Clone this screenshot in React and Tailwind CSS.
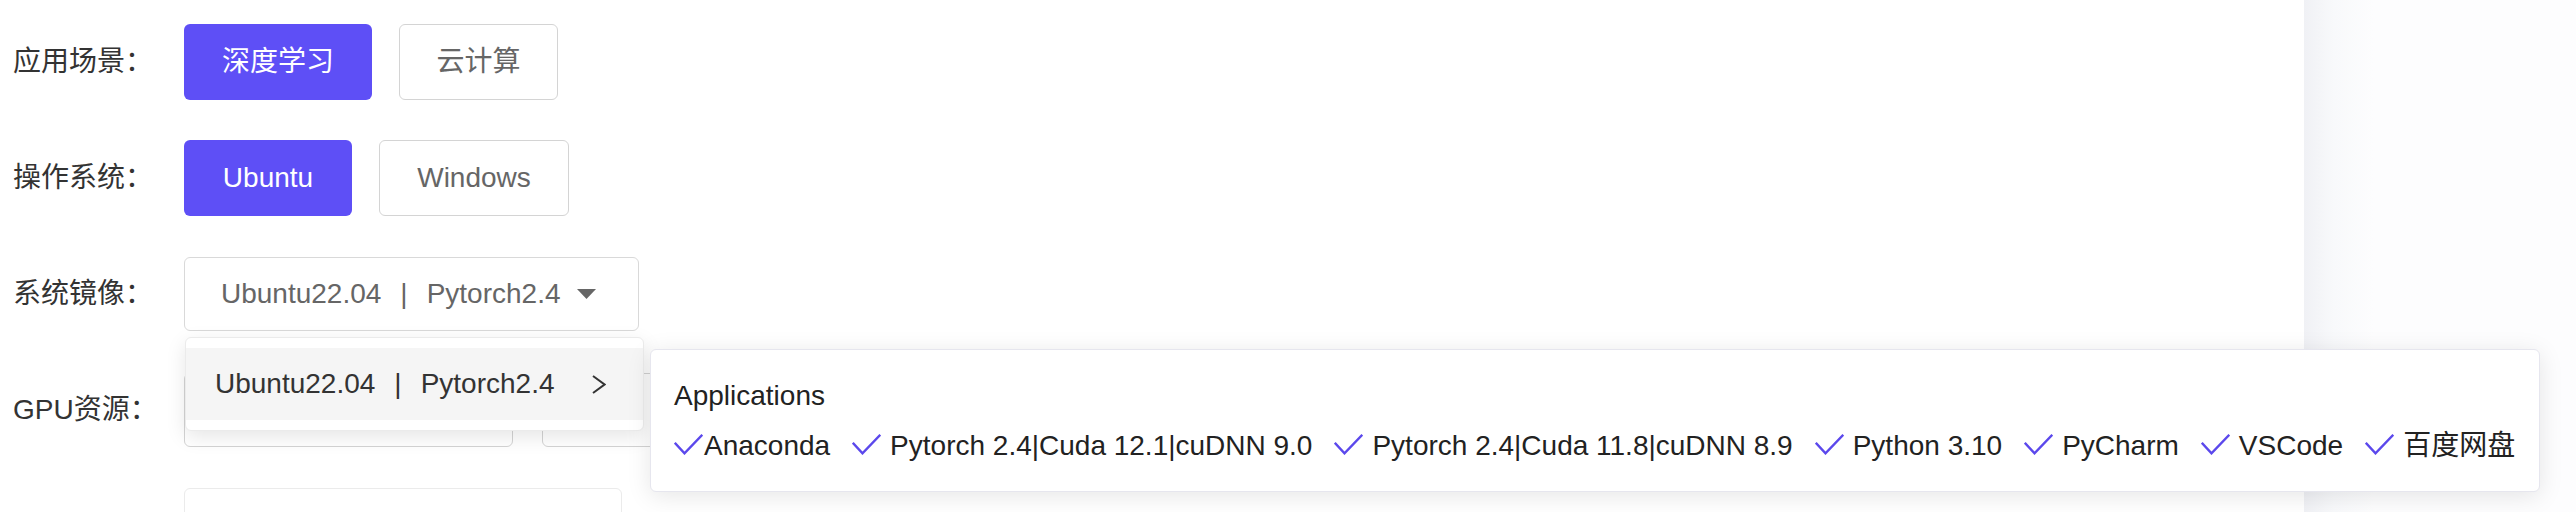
import React from "react";

function Check() {
  return (
    <svg width="29" height="21" viewBox="0 0 29 21" className="shrink-0 mb-[4px]">
      <polyline points="0.8,8.8 10.5,19.3 28.3,0.8" fill="none" stroke="#5b48ec" strokeWidth="2.4" strokeLinejoin="miter" />
    </svg>
  );
}

const apps = [
  "Pytorch 2.4|Cuda 12.1|cuDNN 9.0",
  "Pytorch 2.4|Cuda 11.8|cuDNN 8.9",
  "Python 3.10",
  "PyCharm",
  "VSCode",
  "百度网盘",
];

function Label({ children }) {
  return <div className="w-[171px] shrink-0 text-[#333333]">{children}</div>;
}

export default function App() {
  return (
    <div className="flex h-[512px] w-[2576px] overflow-hidden bg-white font-['Liberation_Sans','Noto_Sans_CJK_SC',sans-serif] text-[28px]">
      <div className="w-[2304px] shrink-0 bg-white">
        <div className="flex flex-col gap-[40px] pl-[13px] pt-[24px]">
          {/* Row 1 */}
          <div className="flex h-[76px] items-center">
            <Label>应用场景：</Label>
            <div className="flex gap-[27px]">
              <button className="flex h-[76px] w-[188px] items-center justify-center rounded-[6px] bg-[#5e4ff6] text-white">
                深度学习
              </button>
              <button className="flex h-[76px] w-[159px] items-center justify-center rounded-[6px] border border-[#d4d4d4] bg-white text-[#666666]">
                云计算
              </button>
            </div>
          </div>
          {/* Row 2 */}
          <div className="flex h-[76px] items-center">
            <Label>操作系统：</Label>
            <div className="flex gap-[27px]">
              <button className="flex h-[76px] w-[168px] items-center justify-center rounded-[6px] bg-[#5e4ff6] text-white">
                Ubuntu
              </button>
              <button className="flex h-[76px] w-[190px] items-center justify-center rounded-[6px] border border-[#d4d4d4] bg-white text-[#666666]">
                Windows
              </button>
            </div>
          </div>
          {/* Row 3 */}
          <div className="flex h-[76px] items-center">
            <Label>系统镜像：</Label>
            <div className="relative">
              <div className="flex h-[74px] w-[455px] items-center rounded-[6px] border border-[#d9d9d9] bg-white pl-[36px] text-[#666666]">
                <span>Ubuntu22.04</span>
                <span className="mx-[19px]">|</span>
                <span>Pytorch2.4</span>
                <svg width="19" height="10" viewBox="0 0 19 10" className="ml-[16px]">
                  <path d="M0 0H19L9.5 10Z" fill="#666666" />
                </svg>
              </div>
              {/* dropdown menu */}
              <div className="absolute left-[1px] top-[80px] z-20 w-[459px] rounded-[6px] border border-[#ebebeb] bg-white py-[10px] shadow-[0_6px_20px_rgba(0,0,0,0.10)]">
                <div className="flex h-[72px] items-center bg-[#f5f5f5] pl-[29px] text-[#333333]">
                  <span>Ubuntu22.04</span>
                  <span className="mx-[19px]">|</span>
                  <span>Pytorch2.4</span>
                  <svg width="14" height="19" viewBox="0 0 14 19" className="ml-[37px]">
                    <polyline points="1,1 12.5,9.5 1,18" fill="none" stroke="#333333" strokeWidth="2" />
                  </svg>
                </div>
              </div>
              {/* applications popup */}
              <div className="absolute left-[466px] top-[92px] z-30 whitespace-nowrap rounded-[6px] border border-[#e6e6ee] bg-white pb-[29px] pl-[23px] pr-[24px] pt-[30px] text-[#222222] shadow-[0_4px_24px_rgba(0,0,0,0.10)]">
                <div className="leading-[32px]">Applications</div>
                <div className="mt-[18px] flex items-center gap-[22px] leading-[32px]">
                  <div className="flex items-center gap-[1px]">
                    <Check />
                    <span>Anaconda</span>
                  </div>
                  {apps.map((a) => (
                    <div key={a} className="flex items-center gap-[9px]">
                      <Check />
                      <span>{a}</span>
                    </div>
                  ))}
                </div>
              </div>
            </div>
          </div>
          {/* Row 4 */}
          <div className="flex h-[76px] items-center">
            <Label>GPU资源：</Label>
            <div className="flex gap-[29px]">
              <div className="h-[74px] w-[329px] rounded-[6px] border border-[#d4d4d4] bg-white" />
              <div className="h-[74px] w-[329px] rounded-[6px] border border-[#d4d4d4] bg-white" />
            </div>
          </div>
          {/* Row 5 */}
          <div className="flex h-[76px] items-start">
            <Label></Label>
            <div className="h-[76px] w-[438px] rounded-[6px] border border-[#ebebeb] bg-white" />
          </div>
        </div>
      </div>
      <div className="flex-1 bg-[linear-gradient(to_right,#f0f1f5,#f8f9fb_30px,#fdfdfe_70px)]" />
    </div>
  );
}
